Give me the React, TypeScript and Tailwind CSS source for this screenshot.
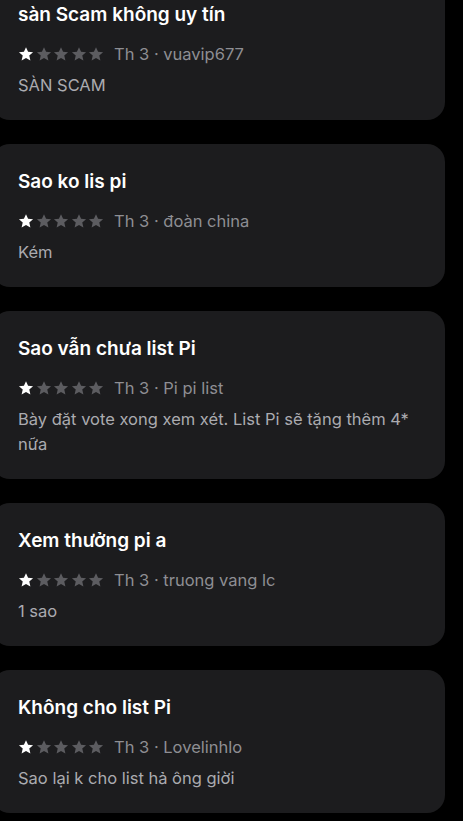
const reviews = [
  { title: 'sàn Scam không uy tín', author: 'vuavip677', body: 'SÀN SCAM' },
  { title: 'Sao ko lis pi', author: 'đoàn china', body: 'Kém' },
  {
    title: 'Sao vẫn chưa list Pi',
    author: 'Pi pi list',
    body: 'Bày đặt vote xong xem xét. List Pi sẽ tặng thêm 4* nữa',
  },
  { title: 'Xem thưởng pi a', author: 'truong vang lc', body: '1 sao' },
  { title: 'Không cho list Pi', author: 'Lovelinhlo', body: 'Sao lại k cho list hả ông giời' },
];

function Star({ filled }: { filled: boolean }) {
  return (
    <svg width="16" height="16" viewBox="0 0 24 24" className={filled ? 'text-white' : 'text-[#5c5c60]'}>
      <path
        fill="currentColor"
        d="M12 1.8l3.1 6.9 7.5.7-5.7 5 1.7 7.4L12 17.9l-6.6 3.9 1.7-7.4-5.7-5 7.5-.7z"
      />
    </svg>
  );
}

function ReviewCard({ title, author, body }: { title: string; author: string; body: string }) {
  return (
    <div className="ml-[-8px] mr-[18px] rounded-[18px] bg-[#1c1c1e] pb-[22px] pl-[26px] pr-[24px] pt-[24px]">
      <p className="text-[19px] font-semibold leading-[28px] text-white">{title}</p>
      <div className="mt-[13px] flex items-center leading-[24px]">
        <div className="flex gap-[1.5px]">
          {[0, 1, 2, 3, 4].map((i) => (
            <Star key={i} filled={i === 0} />
          ))}
        </div>
        <span className="ml-[10px] text-[16.5px] text-[#8e8e93]">Th 3 · {author}</span>
      </div>
      <p className="mt-[7px] text-[16.5px] leading-[25px] text-[#ababb0]">{body}</p>
    </div>
  );
}

export default function App() {
  return (
    <div
      className="h-[821px] overflow-hidden bg-black"
      style={{ fontFamily: 'Inter, "Noto Sans", sans-serif' }}
    >
      <div className="mt-[-23px] flex flex-col gap-[24px]">
        {reviews.map((r) => (
          <ReviewCard key={r.title} {...r} />
        ))}
      </div>
    </div>
  );
}
